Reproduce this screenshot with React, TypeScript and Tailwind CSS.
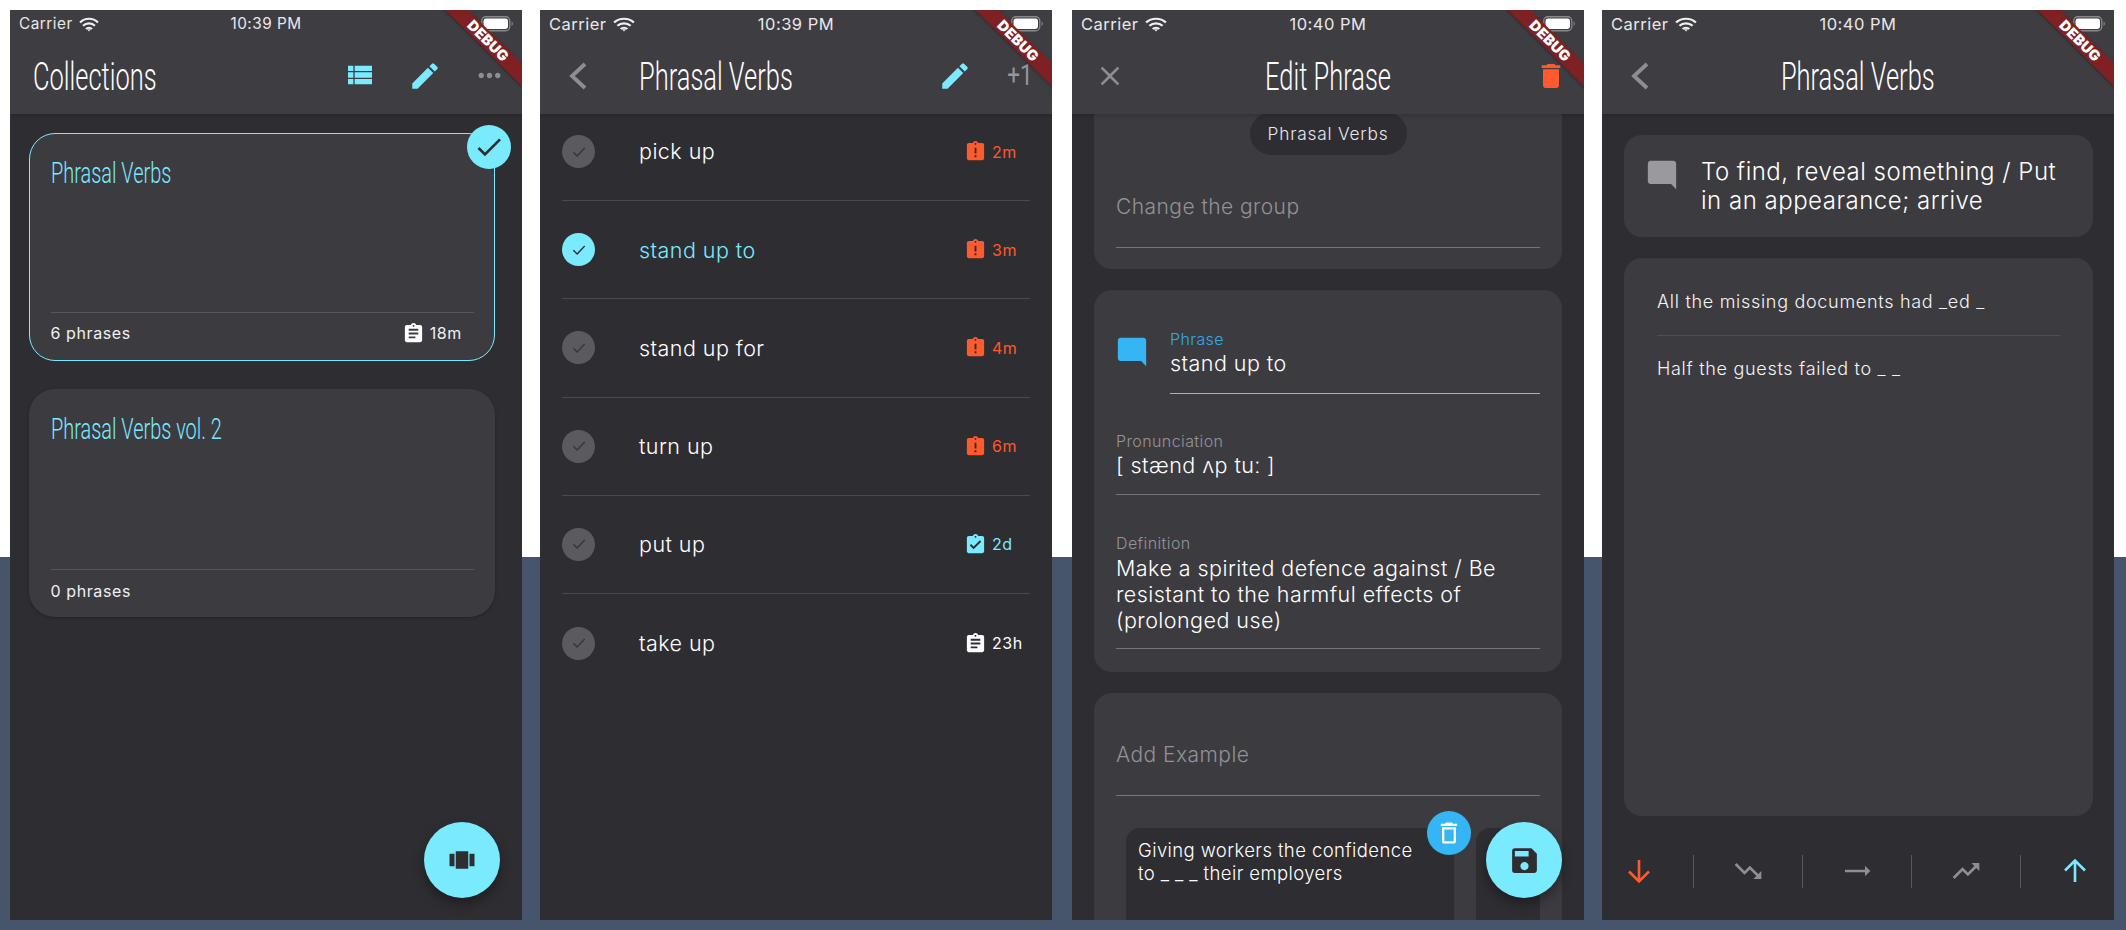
import React from "react";
import {
  MdViewList, MdEdit, MdMoreHoriz, MdCheck, MdAssignment, MdAssignmentLate, MdAssignmentTurnedIn,
  MdViewCarousel, MdClose, MdDelete, MdDeleteOutline, MdSave, MdTrendingDown, MdTrendingFlat, MdTrendingUp,
} from "react-icons/md";

const Wifi = ({ width }: { width: number }) => (
  <svg width={width} height="15" viewBox="0 0 20 15" preserveAspectRatio="none" fill="none" stroke="#f0f0f2" strokeWidth="2.1">
    <path d="M1 5.4a12.8 12.8 0 0 1 18 0" />
    <path d="M4 8.8a8.6 8.6 0 0 1 12 0" />
    <path d="M7 12a4.2 4.2 0 0 1 6 0" />
    <path d="M8.2 12.3 10 14.4l1.8-2.1z" fill="#f0f0f2" stroke="none" />
  </svg>
);

const Battery = () => (
  <svg width="32" height="16" viewBox="0 0 32 16" fill="none" className="relative z-30">
    <rect x="0.75" y="0.75" width="28" height="14" rx="4" stroke="#88878c" strokeWidth="1.3" />
    <rect x="2.5" y="2.5" width="24.5" height="10.5" rx="2.4" fill="#fff" />
    <path d="M30.6 5.5v4.5c.9-.3 1.2-1.2 1.2-2.2s-.3-2-1.2-2.3z" fill="#88878c" />
  </svg>
);

const StatusBar = ({ time, small }: { time: string; small?: boolean }) => (
  <div className={`grid grid-cols-3 items-center h-[28px] pl-[9px] pr-[9px] font-normal tracking-[0.5px] text-[#e8e8ea] ${small ? "text-[15.3px]" : "text-[16.5px]"}`}>
    <div className="flex items-center gap-[6px]">
      <span>Carrier</span>
      <Wifi width={small ? 20 : 22} />
    </div>
    <div className="text-center">{time}</div>
    <div className="flex justify-end">
      <Battery />
    </div>
  </div>
);

const Debug = () => (
  <div className="absolute top-[23px] -right-[46px] w-[160px] h-[16px] rotate-45 bg-[#7f2023] flex items-center justify-center z-20 shadow-[0_1px_3px_rgba(0,0,0,0.3)]">
    <span className="font-['Inter'] font-black text-white text-[14.5px] tracking-[0.2px] leading-none">DEBUG</span>
  </div>
);

const Title = ({ children, size = "big", className = "" }: { children: React.ReactNode; size?: "big" | "small"; className?: string }) => (
  <span
    className={`inline-block font-['Roboto'] font-light whitespace-nowrap ${size === "big" ? "text-[38px] leading-[46px] scale-x-[0.67]" : "text-[29.5px] leading-[36px] scale-x-[0.675]"} ${className}`}
  >
    {children}
  </span>
);

const Back = () => (
  <svg width="20" height="28" viewBox="0 0 20 28" fill="none" stroke="#8e8d92" strokeWidth="3.8">
    <path d="M17 2 4 14l13 12" />
  </svg>
);

const Bar = ({ time, small, left, title, centered, right }: { time: string; small?: boolean; left?: React.ReactNode; title: string; centered?: boolean; right: React.ReactNode }) => (
  <div className="relative z-10 h-[104px] shrink-0 bg-[#3e3d42] text-white shadow-[0_2px_4px_rgba(0,0,0,0.15)]">
    <StatusBar time={time} small={small} />
    <div className="flex items-center h-[76px]">
      {left ? <div className="w-[76px] flex justify-center">{left}</div> : <div className="w-[23px]" />}
      <div className={`flex-1 min-w-0 pt-[2px] ${centered ? "text-center" : ""} ${!centered && left ? "pl-[23px]" : ""}`}>
        <Title className={centered ? "origin-center" : "origin-left"}>{title}</Title>
      </div>
      {right}
    </div>
  </div>
);

const Action = ({ children }: { children: React.ReactNode }) => <div className="w-[65px] flex justify-center">{children}</div>;

const Fab = ({ children, className = "" }: { children: React.ReactNode; className?: string }) => (
  <div className={`absolute w-[76px] h-[76px] rounded-full bg-[#7aebff] flex items-center justify-center z-10 text-[#2e2d32] shadow-[0_6px_12px_rgba(0,0,0,0.35)] ${className}`}>
    {children}
  </div>
);

const Phone = ({ className = "", children }: { className?: string; children: React.ReactNode }) => (
  <div className={`relative w-[512px] h-[910px] shrink-0 overflow-hidden bg-[#2e2d32] flex flex-col ${className}`}>
    <Debug />
    {children}
  </div>
);

const CollectionCard = ({ name, count, selected }: { name: string; count: string; selected?: boolean }) => (
  <div className={`relative h-[228px] rounded-[26px] bg-[#3c3b40] flex flex-col ${selected ? "border-[1.5px] border-[#7aebff] pl-[20.5px] pr-[20px]" : "px-[21.5px] shadow-[0_1px_3px_rgba(0,0,0,0.25)]"}`}>
    <div className={`text-[#7aebff] ${selected ? "pt-[21px] h-[177.5px]" : "pt-[22px] h-[180px]"}`}>
      <Title size="small" className="origin-left">{name}</Title>
    </div>
    <div className="h-[1px] bg-[#57565b]" />
    <div className="flex items-center justify-between h-[41px] text-[16px] tracking-[0.6px] font-normal text-[#f0f0f2]">
      <span>{count}</span>
      {selected && (
        <span className="flex items-center gap-[5px] pr-[12px]">
          <MdAssignment size={23} color="#fff" />
          18m
        </span>
      )}
    </div>
    {selected && (
      <div className="absolute -top-[9px] -right-[17px] w-[44px] h-[44px] rounded-full bg-[#7aebff] flex items-center justify-center text-[#2e2d32]">
        <MdCheck size={32} />
      </div>
    )}
  </div>
);

const rows = [
  { t: "pick up", d: "2m", k: "late" },
  { t: "stand up to", d: "3m", k: "late", on: true },
  { t: "stand up for", d: "4m", k: "late" },
  { t: "turn up", d: "6m", k: "late" },
  { t: "put up", d: "2d", k: "done" },
  { t: "take up", d: "23h", k: "plain" },
];

const PhraseRow = ({ r, last }: { r: (typeof rows)[number]; last: boolean }) => {
  const color = r.k === "late" ? "text-[#ff5a2d]" : r.k === "done" ? "text-[#7aebff]" : "text-white";
  const Icon = r.k === "late" ? MdAssignmentLate : r.k === "done" ? MdAssignmentTurnedIn : MdAssignment;
  return (
    <div className={`h-[98.2px] shrink-0 flex items-center ${last ? "" : "border-b border-[#4a494e]"}`}>
      <div className={`w-[33px] h-[33px] rounded-full flex items-center justify-center ${r.on ? "bg-[#7aebff] text-[#2e2d32]" : "bg-[#5b5a5f] text-[#38373c]"}`}>
        <svg width="16" height="16" viewBox="0 0 24 24" fill="none" stroke="currentColor" strokeWidth="2.2"><path d="M3.5 12.5 9.2 18 20.5 6" /></svg>
      </div>
      <div className={`ml-[44px] flex-1 text-[21.5px] tracking-[0.45px] ${r.on ? "text-[#7aebff]" : "text-white"}`}>{r.t}</div>
      <div className={`w-[66px] flex items-center gap-[5px] text-[16px] tracking-[0.5px] font-normal whitespace-nowrap ${color}`}>
        <Icon size={23} className="shrink-0" />
        {r.d}
      </div>
    </div>
  );
};

const Label = ({ children, blue }: { children: React.ReactNode; blue?: boolean }) => (
  <div className={`text-[16px] tracking-[0.4px] leading-[20px] ${blue ? "text-[#36a8e4]" : "text-[#949398]"}`}>{children}</div>
);

const Chat = ({ color, className = "" }: { color: string; className?: string }) => (
  <svg width="34" height="34" viewBox="0 0 24 24" fill={color} className={`shrink-0 ${className}`}>
    <path d="M4 2h16c1.1 0 2 .9 2 2v18l-3.6-3.6H4c-1.1 0-2-.9-2-2V4c0-1.1.9-2 2-2z" />
  </svg>
);

const Placeholder = ({ children, className = "" }: { children: React.ReactNode; className?: string }) => (
  <div className={`h-[54px] border-b-[1.5px] border-[#76757a] text-[21px] tracking-[0.45px] leading-[26px] text-[#929196] ${className}`}>{children}</div>
);

const ArrowV = ({ up, color }: { up?: boolean; color: string }) => (
  <svg width="26" height="26" viewBox="0 0 26 26" fill="none" stroke={color} strokeWidth="2.6" className={up ? "" : "rotate-180"}>
    <path d="M13 24V3M3 12.5 13 2.5l10 10" />
  </svg>
);

const Cell = ({ children, first }: { children: React.ReactNode; first?: boolean }) => (
  <div className={`w-[109px] h-[33px] shrink-0 flex items-center justify-center ${first ? "" : "border-l border-[#59585d]"}`}>{children}</div>
);

export default function App() {
  return (
    <div className="w-[2126px] h-[930px] overflow-hidden pt-[10px] pl-[10px] flex items-start font-['Inter'] font-[350] bg-[linear-gradient(to_bottom,#ffffff_557px,#46556b_557px)]">
      <Phone>
        <Bar
          time="10:39 PM"
          small
          title="Collections"
          right={
            <div className="flex">
              <Action><MdViewList size={32} color="#7aebff" /></Action>
              <Action><MdEdit size={34} color="#7aebff" /></Action>
              <Action><MdMoreHoriz size={33} color="#8e8d92" /></Action>
            </div>
          }
        />
        <div className="flex flex-col gap-[28px] pt-[19px] pl-[19px] pr-[27px]">
          <CollectionCard name="Phrasal Verbs" count="6 phrases" selected />
          <CollectionCard name="Phrasal Verbs vol. 2" count="0 phrases" />
        </div>
        <Fab className="left-[414px] top-[812px]"><MdViewCarousel size={30} /></Fab>
      </Phone>

      <Phone className="ml-[18px]">
        <Bar
          time="10:39 PM"
          left={<Back />}
          title="Phrasal Verbs"
          right={
            <div className="flex">
              <Action><MdEdit size={34} color="#7aebff" /></Action>
              <Action><span className="font-['Roboto'] font-normal text-[30px] leading-none text-[#97969b] inline-block scale-x-[0.75] mt-[1px]">+1</span></Action>
            </div>
          }
        />
        <div className="flex flex-col px-[22px] -mt-[11px]">
          {rows.map((r, i) => <PhraseRow key={r.t} r={r} last={i === rows.length - 1} />)}
        </div>
      </Phone>

      <Phone className="ml-[20px]">
        <Bar
          time="10:40 PM"
          left={<MdClose size={32} color="#8e8d92" />}
          title="Edit Phrase"
          centered
          right={<div className="w-[76px] flex justify-center pl-[10px]"><MdDelete size={32} color="#ff5a2d" /></div>}
        />
        <div className="flex flex-col gap-[21px] px-[22px]">
          <div className="h-[155px] shrink-0 rounded-b-[18px] bg-[#3c3b40] px-[22px] flex flex-col">
            <div className="self-center -mt-[2px] h-[43px] w-[157px] rounded-full bg-[#2e2d32] flex items-center justify-center text-[17.3px] tracking-[0.8px] text-[#e8e8ea] whitespace-nowrap">Phrasal Verbs</div>
            <Placeholder className="mt-[39px]">Change the group</Placeholder>
          </div>

          <div className="h-[382px] shrink-0 rounded-[18px] bg-[#3c3b40] px-[22px] pt-[39px] text-[21.5px] tracking-[0.45px] text-white">
            <div className="flex items-start">
              <Chat color="#36b5f5" className="mt-[6px] -ml-[1.5px]" />
              <div className="flex-1 ml-[21.5px] border-b-[1.5px] border-[#66ccdd] h-[65px]">
                <Label blue>Phrase</Label>
                <div className="leading-[26px] mt-[1px]">stand up to</div>
              </div>
            </div>
            <div className="mt-[37px] border-b-[1.5px] border-[#76757a] h-[64px]">
              <Label>Pronunciation</Label>
              <div className="leading-[26px] mt-[1px]">[ stænd ʌp tuː ]</div>
            </div>
            <div className="mt-[38px] border-b-[1.5px] border-[#76757a] h-[116px]">
              <Label>Definition</Label>
              <div className="leading-[26px] mt-[2px]">Make a spirited defence against / Be resistant to the harmful effects of (prolonged use)</div>
            </div>
          </div>

          <div className="h-[300px] shrink-0 rounded-t-[18px] bg-[#3c3b40] px-[22px] pt-[49px]">
            <Placeholder>Add Example</Placeholder>
            <div className="flex gap-[22px] mt-[32px] ml-[10px]">
              <div className="relative w-[328px] h-[200px] shrink-0 rounded-t-[14px] bg-[#2e2d32] px-[12px] pt-[11px] text-[18.5px] tracking-[0.4px] leading-[23px] text-white">
                <div className="pr-[10px]">Giving workers the confidence to _ _ _ their employers</div>
                <div className="absolute -top-[17px] left-[301px] w-[44px] h-[44px] rounded-full bg-[#36b5f5] flex items-center justify-center">
                  <MdDeleteOutline size={28} color="#fff" />
                </div>
              </div>
              <div className="flex-1 h-[200px] rounded-t-[14px] bg-[#2e2d32]" />
            </div>
          </div>
        </div>
        <Fab className="left-[414px] top-[812px]"><MdSave size={33} /></Fab>
      </Phone>

      <Phone className="ml-[18px]">
        <Bar time="10:40 PM" left={<Back />} title="Phrasal Verbs" centered right={<div className="w-[76px]" />} />
        <div className="flex-1 min-h-0 flex flex-col pt-[21px]">
          <div className="flex-1 min-h-0 flex flex-col gap-[21px] pl-[22px] pr-[21px]">
            <div className="h-[102px] shrink-0 rounded-[18px] bg-[#3c3b40] flex items-start pl-[21px] pr-[30px] pt-[22px] text-[24px] tracking-[0.5px] leading-[29px] text-white">
              <Chat color="#9a999e" className="mt-[1px]" />
              <div className="ml-[22px]">To find, reveal something / Put in an appearance; arrive</div>
            </div>
            <div className="flex-1 min-h-0 rounded-[18px] bg-[#3c3b40] px-[33px] pt-[32px] text-[18px] tracking-[0.7px] leading-[24px] text-[#f4f4f5]">
              <div className="h-[46px] border-b border-[#4f4e53]">All the missing documents had _ed _</div>
              <div className="pt-[21px]">Half the guests failed to _ _</div>
            </div>
          </div>
          <div className="h-[104px] shrink-0 pt-[6px] flex items-center -ml-[18px]">
            <Cell first><ArrowV color="#ff5a2d" /></Cell>
            <Cell><MdTrendingDown size={32} color="#8e8d92" /></Cell>
            <Cell><MdTrendingFlat size={32} color="#8e8d92" /></Cell>
            <Cell><MdTrendingUp size={32} color="#8e8d92" /></Cell>
            <Cell><ArrowV up color="#7aebff" /></Cell>
          </div>
        </div>
      </Phone>
    </div>
  );
}
